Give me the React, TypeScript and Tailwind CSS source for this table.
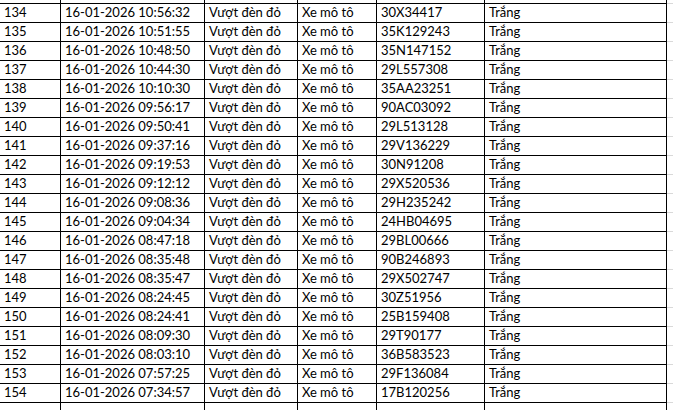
const rows: [number, string, string][] = [
  [133, "16-01-2026 10:58:42", "29H167520"],
  [134, "16-01-2026 10:56:32", "30X34417"],
  [135, "16-01-2026 10:51:55", "35K129243"],
  [136, "16-01-2026 10:48:50", "35N147152"],
  [137, "16-01-2026 10:44:30", "29L557308"],
  [138, "16-01-2026 10:10:30", "35AA23251"],
  [139, "16-01-2026 09:56:17", "90AC03092"],
  [140, "16-01-2026 09:50:41", "29L513128"],
  [141, "16-01-2026 09:37:16", "29V136229"],
  [142, "16-01-2026 09:19:53", "30N91208"],
  [143, "16-01-2026 09:12:12", "29X520536"],
  [144, "16-01-2026 09:08:36", "29H235242"],
  [145, "16-01-2026 09:04:34", "24HB04695"],
  [146, "16-01-2026 08:47:18", "29BL00666"],
  [147, "16-01-2026 08:35:48", "90B246893"],
  [148, "16-01-2026 08:35:47", "29X502747"],
  [149, "16-01-2026 08:24:45", "30Z51956"],
  [150, "16-01-2026 08:24:41", "25B159408"],
  [151, "16-01-2026 08:09:30", "29T90177"],
  [152, "16-01-2026 08:03:10", "36B583523"],
  [153, "16-01-2026 07:57:25", "29F136084"],
  [154, "16-01-2026 07:34:57", "17B120256"],
]

const cell = "flex items-end pl-[4px] pb-[3px] leading-none border-r border-b border-black overflow-hidden whitespace-nowrap"

function Row({ cells, last }: { cells: string[]; last?: boolean }) {
  return (
    <div className="flex h-[19px]">
      <div className={`${cell} w-[61px] ${last ? "border-b-[#d4d4d4]" : ""}`}>{cells[0]}</div>
      <div className={`${cell} w-[144px] ${last ? "border-b-[#d4d4d4]" : ""}`}>{cells[1]}</div>
      <div className={`${cell} w-[93px] ${last ? "border-b-[#d4d4d4]" : ""}`}>{cells[2]}</div>
      <div className={`${cell} w-[79px] ${last ? "border-b-[#d4d4d4]" : ""}`}>{cells[3]}</div>
      <div className={`${cell} w-[108px] ${last ? "border-b-[#d4d4d4]" : ""}`}>{cells[4]}</div>
      <div className={`${cell} w-[182px] ${last ? "border-b-[#d4d4d4]" : ""}`}>{cells[5]}</div>
      <div className="flex-1 border-b border-[#d9d9d9]" />
    </div>
  )
}

export default function App() {
  return (
    <div className="w-[673px] h-[410px] overflow-hidden bg-white text-black font-['Lato',sans-serif] text-[13px]">
      <div className="-mt-[15px]">
        {rows.map(([n, time, plate]) => (
          <Row key={n} cells={[String(n), time, "Vượt đèn đỏ", "Xe mô tô", plate, "Trắng"]} />
        ))}
        <Row cells={["", "", "", "", "", ""]} last />
      </div>
    </div>
  )
}
